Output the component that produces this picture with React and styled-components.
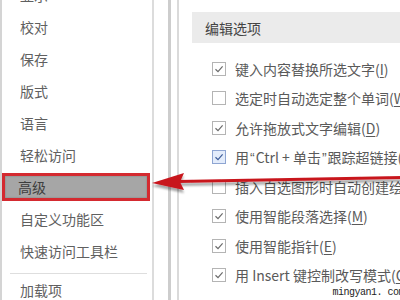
import styled, { createGlobalStyle } from 'styled-components';

const GlobalStyle = createGlobalStyle`
  html, body {
    margin: 0;
    padding: 0;
    background: #fff;
  }
  body {
    font-family: "Noto Sans CJK SC", "Noto Sans", sans-serif;
  }
`;

const menu = [
  { label: '显示' },
  { label: '校对' },
  { label: '保存' },
  { label: '版式' },
  { label: '语言' },
  { label: '轻松访问' },
  { label: '高级', active: true },
  { label: '自定义功能区' },
  { label: '快速访问工具栏' },
  { separator: true },
  { label: '加载项' },
];

// quotes are rendered with a latin font so they stay narrow
const options = [
  { text: ['键入内容替换所选文字'], key: 'I', checked: true },
  { text: ['选定时自动选定整个单词'], key: 'W', checked: false },
  { text: ['允许拖放式文字编辑'], key: 'D', checked: true },
  { text: ['用', '“', 'Ctrl + 单击', '”', '跟踪超链接'], key: 'H', checked: true, hover: true },
  { text: ['插入自选图形时自动创建绘图画布'], key: 'A', checked: false },
  { text: ['使用智能段落选择'], key: 'M', checked: true },
  { text: ['使用智能指针'], key: 'E', checked: true },
  { text: ['用 Insert 键控制改写模式'], key: 'O', checked: true },
];

const App = () => {
  return (
    <>
      <GlobalStyle />
      <Page>
        <Sidebar>
          <MenuList>
            {menu.map((item, i) =>
              item.separator ? (
                <Separator key={i} />
              ) : (
                <MenuItem key={i} $active={item.active}>
                  <span>{item.label}</span>
                </MenuItem>
              )
            )}
          </MenuList>
        </Sidebar>
        <Gutter />
        <Content>
          <SectionHeader>编辑选项</SectionHeader>
          <OptionList>
            {options.map((opt, i) => (
              <OptionRow key={i}>
                <Checkbox $hover={opt.hover}>
                  {opt.checked && (
                    <svg width="10" height="10" viewBox="0 0 10 10">
                      <polyline
                        points="1.5,5.2 4,7.6 8.6,2.4"
                        fill="none"
                        stroke={opt.hover ? '#3d5c98' : '#6a6a6a'}
                        strokeWidth="1.2"
                      />
                    </svg>
                  )}
                </Checkbox>
                <Label>
                  {opt.text.map((part, j) =>
                    part === '“' || part === '”' ? <Quote key={j}>{part}</Quote> : part
                  )}
                  (<u>{opt.key}</u>)
                </Label>
              </OptionRow>
            ))}
          </OptionList>
        </Content>

        <Arrow width="400" height="300" viewBox="0 0 400 300">
          <defs>
            <filter id="sh" x="-10%" y="-200%" width="120%" height="500%">
              <feDropShadow dx="0" dy="3" stdDeviation="1.2" floodColor="#000" floodOpacity="0.35" />
            </filter>
          </defs>
          <g filter="url(#sh)">
            <line x1="178" y1="181.5" x2="402" y2="177.5" stroke="#c8161e" strokeWidth="3.2" />
            <polygon points="152,183 184,173 180,182 184,190" fill="#c8161e" />
          </g>
        </Arrow>
        <Watermark>mingyan1. com</Watermark>
      </Page>
    </>
  );
};

export default App;

const Page = styled.div`
  position: relative;
  display: flex;
  flex-direction: row;
  width: 400px;
  height: 300px;
  overflow: hidden;
  background: #fff;
`;

const Sidebar = styled.div`
  width: 150px;
  flex-shrink: 0;
  border-left: 2px solid #d4d4d4;
  border-right: 2px solid #dcdcdc;
  overflow: hidden;
`;

const MenuList = styled.div`
  margin-top: -21px;
  display: flex;
  flex-direction: column;
`;

const MenuItem = styled.div`
  height: 32px;
  display: flex;
  align-items: stretch;
  font-size: 14px;
  color: ${(p) => (p.$active ? '#3e3e3e' : '#606060')};

  span {
    flex: 1;
    display: flex;
    align-items: center;
    padding-left: ${(p) => (p.$active ? '13px' : '18px')};
    margin: ${(p) => (p.$active ? '2px 2px 2px 0' : '0')};
    background: ${(p) => (p.$active ? '#a6a6a6' : 'transparent')};
    border: ${(p) => (p.$active ? '3px solid #d42a30' : 'none')};
    box-shadow: ${(p) => (p.$active ? 'inset 0 0 2px rgba(0,0,0,0.25)' : 'none')};
  }
`;

const Separator = styled.div`
  height: 7px;
  margin: 0 5px 0 8px;
  border-bottom: 1px solid #dedede;
  box-sizing: border-box;
`;

const Gutter = styled.div`
  width: 6px;
  flex-shrink: 0;
  margin-left: 14px;
  border-left: 3px solid #cdcdcd;
  border-right: 2px solid #dadada;
`;

const Content = styled.div`
  flex: 1;
  min-width: 0;
  padding-left: 13px;
  overflow: hidden;
`;

const SectionHeader = styled.div`
  margin-top: 12px;
  height: 31px;
  display: flex;
  align-items: center;
  padding-left: 13px;
  background: #ebebeb;
  font-size: 14px;
  color: #444;
`;

const OptionList = styled.div`
  margin-top: 11px;
  padding-left: 20px;
  display: flex;
  flex-direction: column;
`;

const OptionRow = styled.div`
  height: 29.5px;
  display: flex;
  align-items: center;
  gap: 9px;
  white-space: nowrap;
`;

const Checkbox = styled.div`
  width: 14px;
  height: 14px;
  box-sizing: border-box;
  flex-shrink: 0;
  display: flex;
  align-items: center;
  justify-content: center;
  border: 1px solid ${(p) => (p.$hover ? '#8ea5d2' : '#b4b4b4')};
  background: ${(p) => (p.$hover ? '#e3ecfb' : '#fff')};
`;

const Label = styled.div`
  font-size: 14px;
  color: #5a5a5a;

  u {
    text-underline-offset: 2px;
  }
`;

const Quote = styled.span`
  font-family: "Liberation Sans", sans-serif;
  padding: 0 1px;
`;

const Arrow = styled.svg`
  position: absolute;
  left: 0;
  top: 0;
  pointer-events: none;
`;

const Watermark = styled.div`
  position: absolute;
  right: -5px;
  top: 287px;
  font-family: "Liberation Mono", monospace;
  font-size: 10px;
  letter-spacing: -0.5px;
  color: #1e1e1e;
  background: rgba(255, 255, 255, 0.85);
  padding: 0 1px;
`;
